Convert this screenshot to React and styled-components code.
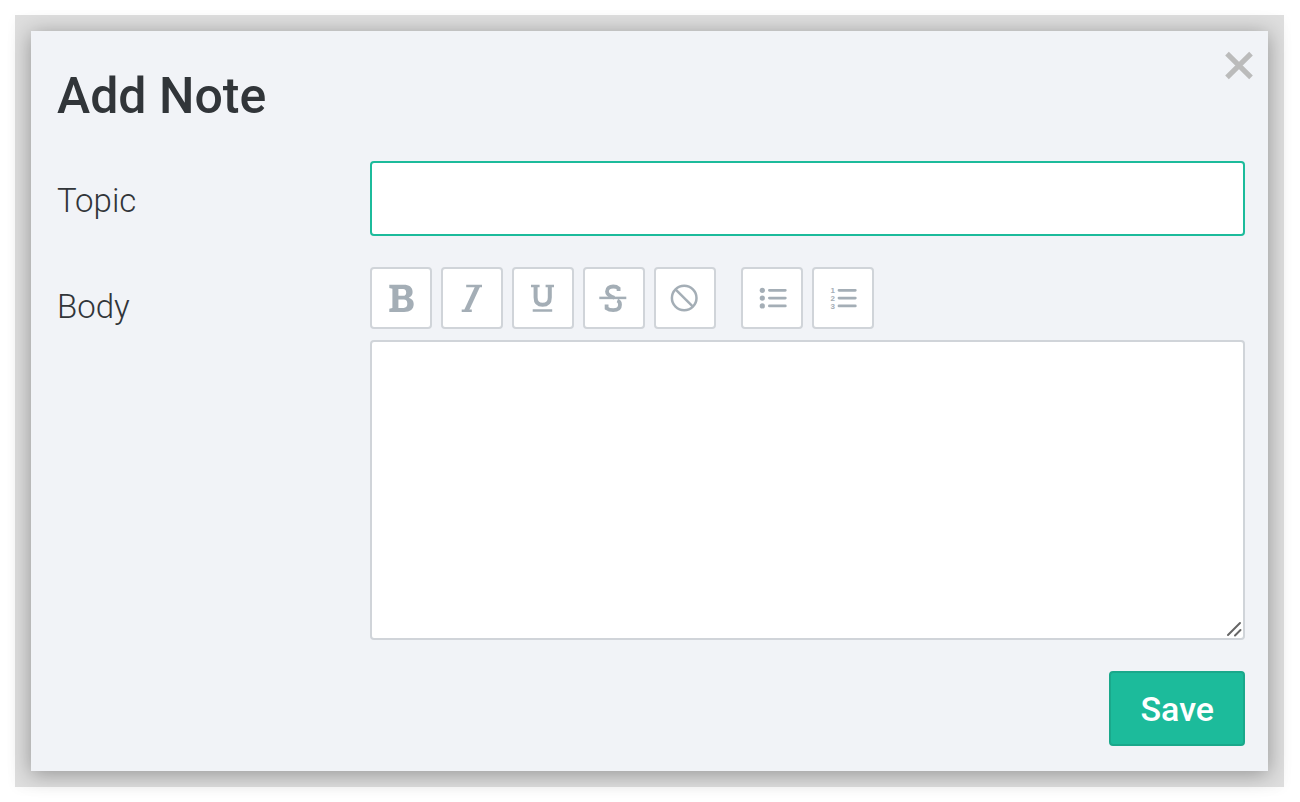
import React from "react";
import styled, { createGlobalStyle } from "styled-components";

const GlobalStyle = createGlobalStyle`
  * { box-sizing: border-box; }
  body {
    margin: 0;
    background: #fff;
    color: #313539;
    font-family: Roboto, "Liberation Sans", sans-serif;
  }
`;

const Frame = styled.div`
  margin: 15px 16px 15px 15px;
  padding: 16px;
  background: #dedede;
  box-shadow: 0 2px 12px rgba(0, 0, 0, 0.03);
`;

const Dialog = styled.section`
  position: relative;
  padding: 35px 23px 25px 26px;
  background: #f1f3f7;
  box-shadow: 0 3px 20px rgba(0, 0, 0, 0.34);
`;

const Title = styled.h1`
  margin: 0 0 35px;
  font-size: 50px;
  line-height: 60px;
  font-weight: 500;
`;

const CloseButton = styled.button`
  position: absolute;
  top: 20px;
  right: 14px;
  display: flex;
  padding: 0;
  border: 0;
  background: none;
  color: #bbb;
  cursor: pointer;
`;

const Form = styled.form`
  display: flex;
  flex-direction: column;
  gap: 31px;
`;

const Field = styled.div`
  display: grid;
  grid-template-columns: 313px minmax(0, 1fr);
`;

const Label = styled.label`
  padding-top: 20px;
  font-size: 33px;
  line-height: 40px;
  font-weight: 300;
`;

const TextInput = styled.input`
  width: 100%;
  height: 75px;
  padding: 0 20px;
  border: 2px solid #1cbb9b;
  border-radius: 4px;
  background: #fff;
  color: inherit;
  font: inherit;
  font-size: 34px;
  outline: none;
`;

const Editor = styled.div`
  display: flex;
  flex-direction: column;
  gap: 11px;
`;

const Toolbar = styled.div`
  display: flex;
  gap: 25px;
`;

const ToolGroup = styled.div`
  display: flex;
  gap: 9px;
`;

const ToolButton = styled.button`
  display: flex;
  align-items: center;
  justify-content: center;
  width: 62px;
  height: 62px;
  padding: 0;
  border: 2px solid #d0d4d9;
  border-radius: 4px;
  background: #fff;
  color: #a4aeb6;
  cursor: pointer;
`;

const BodyBox = styled.div`
  position: relative;
  display: flex;
`;

const BodyInput = styled.textarea`
  width: 100%;
  height: 300px;
  padding: 16px 20px;
  border: 2px solid #d0d4d9;
  border-radius: 4px;
  background: #fff;
  color: inherit;
  font: inherit;
  font-size: 34px;
  resize: none;
  outline: none;
`;

const Grip = styled.svg`
  position: absolute;
  right: 2px;
  bottom: 2px;
  pointer-events: none;
`;

const Actions = styled.div`
  display: flex;
  justify-content: flex-end;
`;

const SaveButton = styled.button`
  height: 75px;
  padding: 0 29px;
  border: 2px solid #1aa88b;
  border-radius: 4px;
  background: #1cbb9b;
  color: #fff;
  font: inherit;
  font-size: 34px;
  font-weight: 500;
  cursor: pointer;
`;

const Icon = ({ children }) => (
  <svg width="30" height="30" viewBox="0 0 30 30" fill="none" stroke="currentColor" aria-hidden="true">
    {children}
  </svg>
);

const BoldIcon = () => (
  <Icon>
    <path
      fill="currentColor"
      stroke="none"
      fillRule="evenodd"
      d="M3.3 1.8H17.5C23.4 1.8 26.6 4.4 26.6 8.9C26.6 11.7 25.2 13.7 22.7 14.7C25.9 15.6 27.7 17.8 27.7 21C27.7 26.1 24.2 29 18.1 29H3.3V25.7L6.4 25V5.8L3.3 5.1ZM12.4 5.9V12.8H17C19.2 12.8 20.2 11.6 20.2 9.4C20.2 7.1 19.2 5.9 17 5.9ZM12.4 16.6V24.9H17.6C20.1 24.9 21.3 23.5 21.3 20.8C21.3 18 20.2 16.6 17.7 16.6Z"
    />
  </Icon>
);

const ItalicIcon = () => (
  <Icon>
    <path strokeWidth="2.6" d="M9.2 3H25M4.7 27.7H14.8" />
    <path strokeWidth="4.6" d="M20.8 3L9.4 27.7" />
  </Icon>
);

const UnderlineIcon = () => (
  <Icon>
    <path strokeWidth="2.5" d="M3 3H11.6M17.6 3H26M4.7 27.5H24.2" />
    <path strokeWidth="4" d="M7.6 3V14.5C7.6 19.5 10 21.8 14.6 21.8S21.8 19.5 21.8 14.5V3" />
  </Icon>
);

const StrikeIcon = () => (
  <Icon>
    <path strokeWidth="2.5" d="M0.3 14.9H27.3" />
    <path strokeWidth="3.8" d="M19.6 8V5.4C18.2 4.1 16.4 3.5 14.2 3.5C10.5 3.5 8 5.3 8 8.4C8 11.8 11.2 13.3 15.4 14.7" />
    <path strokeWidth="3.8" d="M7.6 21.5V25.2C9.3 26.5 11.4 27.1 14.2 27.1C18.5 27.1 21 25.2 21 21.7C21 19.6 20.2 18.3 18.4 17.6" />
  </Icon>
);

const ClearIcon = () => (
  <Icon>
    <circle cx="14.2" cy="15" r="12.3" strokeWidth="2.5" />
    <path strokeWidth="2.5" d="M5.5 6.3L22.9 23.7" />
  </Icon>
);

const BulletListIcon = () => (
  <Icon>
    <path strokeWidth="2.8" strokeLinecap="round" d="M12.4 7.3H28.3M12.4 15.1H28.3M12.4 22.9H28.3" />
    <g fill="currentColor" stroke="none">
      <circle cx="5.3" cy="7.3" r="2.6" />
      <circle cx="5.3" cy="15.1" r="2.6" />
      <circle cx="5.3" cy="22.9" r="2.6" />
    </g>
  </Icon>
);

const NumberedListIcon = () => (
  <Icon>
    <path strokeWidth="2.8" strokeLinecap="round" d="M11 7.3H27.3M11 15.1H27.3M11 22.9H27.3" />
    <g fill="currentColor" stroke="none" fontSize="8" fontWeight="700" textAnchor="middle">
      <text x="4.7" y="10">1</text>
      <text x="4.7" y="18">2</text>
      <text x="4.7" y="26">3</text>
    </g>
  </Icon>
);

const toolGroups = [
  [
    ["Bold", BoldIcon],
    ["Italic", ItalicIcon],
    ["Underline", UnderlineIcon],
    ["Strikethrough", StrikeIcon],
    ["Clear formatting", ClearIcon],
  ],
  [
    ["Bulleted list", BulletListIcon],
    ["Numbered list", NumberedListIcon],
  ],
];

export default function App() {
  return (
    <>
      <GlobalStyle />
      <Frame>
        <Dialog role="dialog" aria-labelledby="dialog-title">
          <Title id="dialog-title">Add Note</Title>
          <CloseButton type="button" aria-label="Close">
            <svg width="30" height="30" viewBox="0 0 30 30" fill="none" stroke="currentColor" strokeWidth="5.2" aria-hidden="true">
              <path d="M3 2.7L27 26.3M27 2.7L3 26.3" />
            </svg>
          </CloseButton>
          <Form onSubmit={(event) => event.preventDefault()}>
            <Field>
              <Label htmlFor="topic">Topic</Label>
              <TextInput id="topic" type="text" />
            </Field>
            <Field>
              <Label htmlFor="body">Body</Label>
              <Editor>
                <Toolbar role="toolbar" aria-label="Formatting">
                  {toolGroups.map((group, index) => (
                    <ToolGroup key={index}>
                      {group.map(([name, Glyph]) => (
                        <ToolButton key={name} type="button" aria-label={name}>
                          <Glyph />
                        </ToolButton>
                      ))}
                    </ToolGroup>
                  ))}
                </Toolbar>
                <BodyBox>
                  <BodyInput id="body" />
                  <Grip width="17" height="17" viewBox="0 0 17 17" fill="none" stroke="#666" strokeWidth="2" strokeLinecap="round" aria-hidden="true">
                    <path d="M2 14L14 2M9 14.5L14.5 9" />
                  </Grip>
                </BodyBox>
              </Editor>
            </Field>
            <Actions>
              <SaveButton type="submit">Save</SaveButton>
            </Actions>
          </Form>
        </Dialog>
      </Frame>
    </>
  );
}
